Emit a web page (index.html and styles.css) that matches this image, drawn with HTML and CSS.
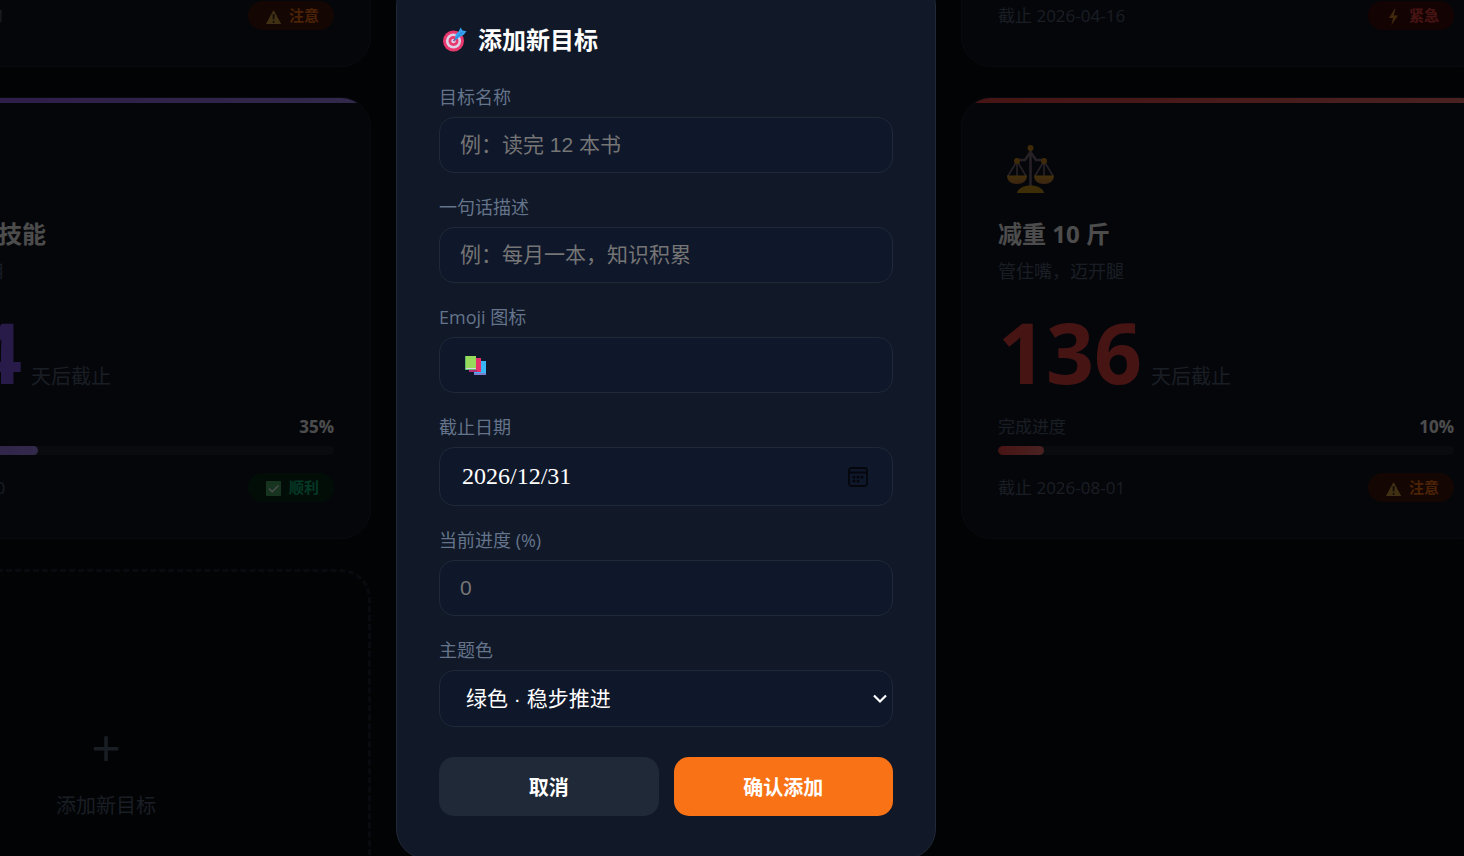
FILE: index.html
```html
<!DOCTYPE html>
<html lang="zh-CN">

<head>
    <meta charset="UTF-8">
    <meta name="viewport" content="width=device-width, initial-scale=1.0">
    <title>目标倒计时</title>
    <link rel="stylesheet" href="styles.css">
</head>

<body>
    <!-- 图标 -->
    <svg class="sprite" aria-hidden="true">
        <symbol id="icon-warn" viewBox="0 0 22 20">
            <path d="M10.6 4 18.2 18H3z" fill="#d9a645" />
            <path d="M10.6 8v5.6M10.6 15v1.8" stroke="#3b2a1a" stroke-width="1.8" />
        </symbol>
        <symbol id="icon-bolt" viewBox="0 0 22 20">
            <path d="M11.6 3 6 12h4l-1.6 7L15 9.600h-4.200L12.400 3z" fill="#d98a2d" />
        </symbol>
        <symbol id="icon-ok" viewBox="0 0 22 20">
            <rect x="3" y="3" width="15" height="15" rx="1" fill="#4fae6b" />
            <path d="m6 10.500 3.200 3.200L15.500 7.500" fill="none" stroke="#fff" stroke-width="1.400" />
        </symbol>
    </svg>

    <main class="board">
        <article class="card purple">
            <div class="card-footer">
                <span>截止 2026-12-31</span>
                <span class="tag tag-warn"><svg><use href="#icon-warn" /></svg>注意</span>
            </div>
        </article>

        <article class="card red last">
            <div class="card-footer">
                <span>截止 2026-04-16</span>
                <span class="tag tag-danger"><svg><use href="#icon-bolt" /></svg>紧急</span>
            </div>
        </article>

        <article class="card purple">
            <div class="card-icon"></div>
            <h3>学会一项新技能</h3>
            <p class="desc">学完马上就能用</p>
            <div class="countdown"><strong>104</strong><span>天后截止</span></div>
            <div class="progress-head"><span>完成进度</span><b>35%</b></div>
            <div class="track"><div class="fill" style="width: 35%"></div></div>
            <div class="card-footer">
                <span>截止 2026-06-30</span>
                <span class="tag tag-ok"><svg><use href="#icon-ok" /></svg>顺利</span>
            </div>
        </article>

        <article class="card red last">
            <div class="card-icon">
                <svg viewBox="0 0 66 66">
                    <defs>
                        <linearGradient id="gold" x1="0" y1="0" x2="0" y2="1">
                            <stop offset="0" stop-color="#e0a321" />
                            <stop offset="1" stop-color="#c67a3e" />
                        </linearGradient>
                    </defs>
                    <path d="M32.500 14v42M19 26h8l5.500-8 5.500 8h8" fill="none" stroke="#83717f" stroke-width="2.500" />
                    <path d="m19 27-9 15M19 27l9 15M19 27v15M46 27l-9 15M46 27l9 15M46 27v15" stroke="#83717f" stroke-width="1.600" />
                    <path d="M9 41.500h20c0 5-4 8.500-10 8.500S9 46.500 9 41.500zM36 41.500h20c0 5-4 8.500-10 8.500s-10-3.500-10-8.500z" fill="url(#gold)" />
                    <path d="M19 59c1-5 7-7.500 13.500-7.500S45 54 46 59z" fill="#d19b1c" />
                    <circle cx="32.500" cy="14" r="3" fill="#cf8a1d" />
                    <circle cx="19" cy="27" r="3" fill="#cf8a1d" />
                    <circle cx="46" cy="27" r="3" fill="#cf8a1d" />
                </svg>
            </div>
            <h3>减重 10 斤</h3>
            <p class="desc">管住嘴，迈开腿</p>
            <div class="countdown"><strong>136</strong><span>天后截止</span></div>
            <div class="progress-head"><span>完成进度</span><b>10%</b></div>
            <div class="track"><div class="fill" style="width: 10%"></div></div>
            <div class="card-footer">
                <span>截止 2026-08-01</span>
                <span class="tag tag-warn"><svg><use href="#icon-warn" /></svg>注意</span>
            </div>
        </article>

        <button type="button" class="add-card">
            <span class="plus">+</span>
            <span>添加新目标</span>
        </button>
    </main>

    <div class="overlay">
        <form class="modal" id="goalForm">
            <h2>
                <svg viewBox="0 0 32 32">
                    <circle cx="14.500" cy="17" r="10.500" fill="#e8386d" />
                    <circle cx="14.500" cy="17" r="7.600" fill="#dcd0e6" />
                    <circle cx="14.500" cy="17" r="5" fill="#e8386d" />
                    <circle cx="14.500" cy="17" r="2.300" fill="#dcd0e6" />
                    <path d="m14.500 17 6-6" stroke="#66549a" stroke-width="1.600" />
                    <path d="M16.500 10.500 20 7l1.500-3.500 2 3 4 .7-2.800 3.600-3.800 2.200-4.700 3z" fill="#36a3f0" />
                    <path d="m16.500 15 7-7" stroke="#1f7ad6" stroke-width="1" />
                </svg>
                添加新目标
            </h2>

            <div class="field">
                <label for="name">目标名称</label>
                <input type="text" id="name" placeholder="例：读完 12 本书">
            </div>
            <div class="field">
                <label for="desc">一句话描述</label>
                <input type="text" id="desc" placeholder="例：每月一本，知识积累">
            </div>
            <div class="field">
                <label for="emoji">Emoji 图标</label>
                <div class="control">
                    <input type="text" id="emoji">
                    <svg class="books" viewBox="0 0 22 20">
                        <path d="M9 6h12v14H9z" fill="#38b6f5" />
                        <path d="M9 18h12v2H9z" fill="#7b7fd0" />
                        <path d="M4 3h12v14H4z" fill="#e5306a" />
                        <path d="M4 15h8v2H4z" fill="#b12a78" />
                        <path d="M0 1h11v14H0z" fill="#63b96a" />
                        <path d="M1 1h10v12H1z" fill="#97d95a" />
                        <path d="M1 13h10v1H1z" fill="#d9d3ea" />
                    </svg>
                </div>
            </div>
            <div class="field">
                <label for="deadline">截止日期</label>
                <div class="control">
                    <input type="text" id="deadline" class="date" value="2026/12/31">
                    <svg class="calendar" viewBox="0 0 20 20" fill="none" stroke="#05070c" stroke-width="1.800">
                        <rect x="1" y="1" width="18" height="18" rx="2.500" />
                        <path d="M1 5.500h18" />
                        <path d="M6 10h.01M10 10h.01M14 10h.01M6 14h.01M10 14h.01" stroke-width="3" stroke-linecap="round" />
                    </svg>
                </div>
            </div>
            <div class="field">
                <label for="progress">当前进度 (%)</label>
                <input type="text" inputmode="numeric" id="progress" placeholder="0">
            </div>
            <div class="field">
                <label for="theme">主题色</label>
                <div class="control">
                    <select id="theme">
                        <option>绿色 · 稳步推进</option>
                    </select>
                    <svg class="chevron" viewBox="0 0 14 10" fill="none" stroke="#fff" stroke-width="2.200">
                        <path d="m1 1.500 6 6 6-6" />
                    </svg>
                </div>
            </div>

            <div class="actions">
                <button type="button" class="btn-cancel">取消</button>
                <button type="submit" class="btn-confirm">确认添加</button>
            </div>
        </form>
    </div>

    <script>
        document.getElementById('goalForm').addEventListener('submit', (e) => {
            e.preventDefault();
        });
    </script>
</body>

</html>
```
FILE: styles.css
```css
* {
    box-sizing: border-box;
    margin: 0;
    padding: 0;
}

body {
    font-family: 'Open Sans', 'Noto Sans CJK SC', sans-serif;
    background: #080b12;
    color: #fff;
    height: 100vh;
    overflow: hidden;
}

.sprite {
    display: none;
}

/* 目标卡片 */
.board {
    display: grid;
    grid-template-columns: repeat(3, 1fr);
    gap: 30px;
    margin: -36px -27px 0 -159px;
}

.card {
    position: relative;
    overflow: hidden;
    padding: 36px;
    background: #111624;
    border: 1px solid #1f2432;
    border-radius: 30px;
}

.card.last {
    grid-column: 3;
}

.card::before {
    content: '';
    position: absolute;
    top: 0;
    left: 0;
    right: 0;
    height: 5px;
    background: var(--bar);
}

.purple {
    --main: #8b5cf6;
    --bar: linear-gradient(to right, #9b51f6, #a78bfa);
}

.red {
    --main: #ef4444;
    --bar: linear-gradient(to right, #ef4444, #f87171);
}

.card-icon {
    height: 66px;
    margin-bottom: 16px;
}

.card-icon svg {
    display: block;
    width: 66px;
    height: 66px;
}

.card h3 {
    font-size: 24px;
    line-height: 36px;
    margin-bottom: 6px;
}

.desc {
    font-size: 18px;
    line-height: 26px;
    color: #56637a;
    margin-bottom: 26px;
}

.countdown {
    display: flex;
    align-items: baseline;
    gap: 9px;
    margin-bottom: 21px;
    font-size: 20px;
    line-height: 28px;
    color: #56637a;
}

.countdown strong {
    font-size: 84px;
    line-height: 84px;
    color: var(--main);
}

.progress-head {
    display: flex;
    justify-content: space-between;
    font-size: 17px;
    line-height: 24px;
    color: #56637a;
    margin-bottom: 7px;
}

.progress-head b {
    color: #fff;
}

.track {
    height: 9px;
    border-radius: 5px;
    background: #1f2630;
    overflow: hidden;
    margin-bottom: 18px;
}

.fill {
    height: 100%;
    border-radius: 5px;
    background: var(--bar);
}

.card-footer {
    display: flex;
    justify-content: space-between;
    align-items: center;
    font-size: 17px;
    line-height: 21px;
    color: #56637a;
}

.tag {
    display: flex;
    align-items: center;
    gap: 4px;
    padding: 4px 15px;
    border-radius: 15px;
    font-size: 15px;
    font-weight: 700;
}

.tag svg {
    width: 22px;
    height: 20px;
}

.tag-warn {
    color: #f97316;
    background: #431407;
}

.tag-danger {
    color: #ef4444;
    background: #450a0a;
}

.tag-ok {
    color: #10b981;
    background: #052e16;
}

.add-card {
    display: flex;
    flex-direction: column;
    align-items: center;
    min-height: 441px;
    padding-top: 139px;
    background: none;
    border: 3px dashed #1f2432;
    border-radius: 30px;
    font-family: inherit;
    font-size: 20px;
    line-height: 28px;
    color: #56637a;
    cursor: pointer;
}

.plus {
    font-size: 52px;
    line-height: 72px;
    margin-bottom: 9px;
}

/* 弹窗 */
.overlay {
    position: fixed;
    inset: 0;
    display: flex;
    justify-content: center;
    align-items: flex-start;
    padding-right: 132px;
    background: rgba(0, 0, 0, 0.7);
}

.modal {
    width: 100%;
    max-width: 540px;
    margin-top: -24px;
    padding: 42px;
    background: #111827;
    border: 1px solid #1f2937;
    border-radius: 30px;
}

.modal h2 {
    display: flex;
    align-items: center;
    gap: 7px;
    font-size: 24px;
    line-height: 42px;
    margin-bottom: 23px;
}

.modal h2 svg {
    width: 32px;
    height: 32px;
}

.field {
    margin-bottom: 21px;
}

.field label {
    display: block;
    font-size: 18px;
    line-height: 26px;
    color: #64748b;
    margin-bottom: 7px;
}

.control {
    position: relative;
}

.field input,
.field select {
    display: block;
    width: 100%;
    height: 56px;
    padding: 0 20px;
    background: #0f172a;
    border: 1px solid #1f2937;
    border-radius: 15px;
    color: #fff;
    font-family: 'Liberation Sans', 'Noto Sans CJK SC', sans-serif;
    font-size: 21px;
    outline: none;
}

.field input::placeholder {
    color: #757575;
}

.field input.date {
    height: 59px;
    padding: 0 22px;
    font-family: 'Liberation Serif', serif;
    font-size: 24px;
}

.field select {
    height: 57px;
    padding: 0 26px;
    appearance: none;
}

.control svg {
    position: absolute;
    top: 0;
    bottom: 0;
    margin: auto 0;
    pointer-events: none;
}

.books {
    left: 26px;
    width: 22px;
    height: 20px;
}

.calendar {
    right: 25px;
    width: 20px;
    height: 20px;
}

.chevron {
    right: 6px;
    width: 14px;
    height: 10px;
}

.actions {
    display: flex;
    gap: 15px;
    margin-top: 30px;
}

.actions button {
    flex: 1;
    height: 59px;
    border: none;
    border-radius: 15px;
    color: #fff;
    font-family: inherit;
    font-size: 20px;
    font-weight: 700;
    cursor: pointer;
}

.btn-cancel {
    background: #1f2937;
}

.btn-confirm {
    background: #f97316;
}
```
